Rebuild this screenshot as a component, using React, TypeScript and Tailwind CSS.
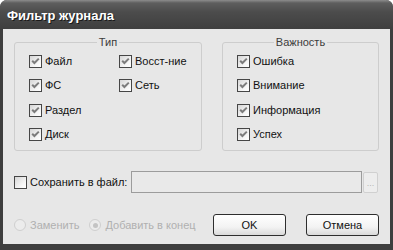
import type { ReactNode } from 'react';

const body = "font-['Liberation_Sans',Arial,sans-serif] text-[11px] leading-none whitespace-nowrap";

function Check({ label, checked = true }: { label: string; checked?: boolean }) {
    return (
        <label className="flex items-center gap-[3px] text-[#111]">
            <span className="flex h-[13px] w-[13px] shrink-0 items-center justify-center border border-[#464646] bg-[linear-gradient(135deg,#d6d6d6,#f7f7f7_70%,#ffffff)]">
                {checked && (
                    <svg width="9" height="9" viewBox="0 0 9 9">
                        <polyline points="1.2,3.8 3.4,6 7.8,1.6" fill="none" stroke="#7c7c7c" strokeWidth="2" />
                    </svg>
                )}
            </span>
            <span>{label}</span>
        </label>
    );
}

function Radio({ label, selected = false }: { label: string; selected?: boolean }) {
    return (
        <label className="flex items-center gap-[4px] text-[#b0b0b0]">
            <span className="flex h-[12px] w-[12px] shrink-0 items-center justify-center rounded-full border border-[#cfcfcf] bg-[#ececec]">
                {selected && <span className="h-[5px] w-[5px] rounded-full bg-[#c4c4c4]" />}
            </span>
            <span>{label}</span>
        </label>
    );
}

function Group({ title, className, children }: { title: string; className: string; children: ReactNode }) {
    return (
        <fieldset className={`h-[114px] rounded-[3px] border border-[#cdcdcd] ${className}`}>
            <legend className="mx-auto px-[2px] text-[#3c3c3c]">{title}</legend>
            {children}
        </fieldset>
    );
}

function Button({ label }: { label: string }) {
    return (
        <button className="flex h-[22px] w-[73px] items-center justify-center rounded-[3px] border border-[#2e2e2e] bg-[linear-gradient(to_bottom,#ffffff,#f3f3f3_60%,#dadada)] text-[#111]">
            {label}
        </button>
    );
}

export default function App() {
    return (
        <div className={`flex h-[250px] w-[393px] flex-col rounded-t-[7px] bg-[#3e3e3e] ${body}`}>
            {/* заголовок окна */}
            <div className="flex h-[29px] items-center rounded-t-[7px] bg-[linear-gradient(to_bottom,#8c8c8c_0px,#5e5e5e_3px,#4c4c4c_12px,#3f3f3f_100%)] pl-[7px] pt-[1px]">
                <span className="font-['Liberation_Sans',sans-serif] text-[13px] font-bold text-white [text-shadow:1px_1px_0_#1a1a1a]">
                    Фильтр журнала
                </span>
            </div>

            <div className="mx-[3px] mb-[6px] flex flex-1 flex-col bg-[#e7e7e7] px-[11px]">
                <div className="mt-[8px] flex gap-[20px]">
                    <Group title="Тип" className="w-[188px]">
                        <div className="grid grid-cols-[90px_1fr] auto-rows-[24.5px] pl-[14px] pt-[1px]">
                            <Check label="Файл" />
                            <Check label="Восст-ние" />
                            <Check label="ФС" />
                            <Check label="Сеть" />
                            <Check label="Раздел" />
                            <div />
                            <Check label="Диск" />
                        </div>
                    </Group>
                    <Group title="Важность" className="w-[157px]">
                        <div className="grid auto-rows-[24.5px] pl-[14px] pt-[1px]">
                            <Check label="Ошибка" />
                            <Check label="Внимание" />
                            <Check label="Информация" />
                            <Check label="Успех" />
                        </div>
                    </Group>
                </div>

                <div className="mt-[20px] flex items-center">
                    <div className="w-[117px]">
                        <Check label="Сохранить в файл:" checked={false} />
                    </div>
                    <div className="h-[22px] w-[231px] border border-[#9c9c9c] bg-[#e9e9e9]" />
                    <div className="ml-[1px] flex h-[21px] w-[15px] items-end justify-center rounded-[2px] border border-[#d0d0d0] bg-[#ededed] pb-[4px] text-[9px] text-[#b4b4b4]">
                        ...
                    </div>
                </div>

                <div className="mt-[21px] flex items-center">
                    <div className="flex gap-[10px]">
                        <Radio label="Заменить" />
                        <Radio label="Добавить в конец" selected />
                    </div>
                    <div className="ml-auto flex gap-[20px]">
                        <Button label="OK" />
                        <Button label="Отмена" />
                    </div>
                </div>
            </div>
        </div>
    );
}
